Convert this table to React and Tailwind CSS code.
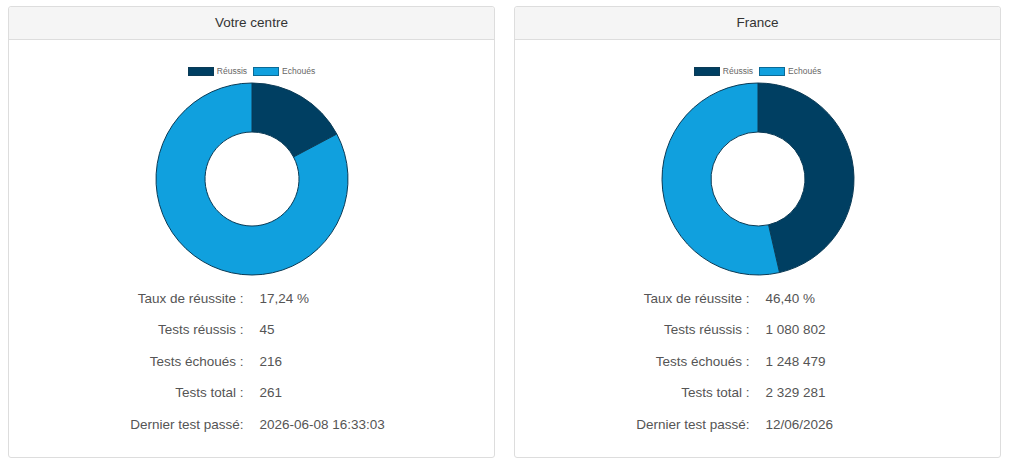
import React from 'react'

const DARK = '#003f62'
const LIGHT = '#10a0de'

function arcPath(cx, cy, R, r, a0, a1) {
  // angles as fractions of a full turn, starting at 12 o'clock, clockwise
  const p = (rad, f) => {
    const t = f * Math.PI * 2 - Math.PI / 2
    return [cx + rad * Math.cos(t), cy + rad * Math.sin(t)]
  }
  const large = a1 - a0 > 0.5 ? 1 : 0
  const [x0, y0] = p(R, a0)
  const [x1, y1] = p(R, a1)
  const [x2, y2] = p(r, a1)
  const [x3, y3] = p(r, a0)
  return `M${x0} ${y0} A${R} ${R} 0 ${large} 1 ${x1} ${y1} L${x2} ${y2} A${r} ${r} 0 ${large} 0 ${x3} ${y3} Z`
}

function Donut({ rate }) {
  const f = rate / 100
  return (
    <svg width="194" height="194" viewBox="0 0 194 194">
      <path d={arcPath(97, 97, 96, 47, 0, f)} fill={DARK} stroke="#0b3b56" strokeWidth="1" />
      <path d={arcPath(97, 97, 96, 47, f, 1)} fill={LIGHT} stroke="#0b3b56" strokeWidth="1" />
    </svg>
  )
}

function Legend() {
  return (
    <div className="flex justify-center items-center h-[9px] text-[8.5px] leading-none text-[#666]">
      <span className="w-[26px] h-[9px] bg-[#003f62] border border-[#0b3b56]" />
      <span className="ml-[3px]">Réussis</span>
      <span className="ml-[6px] w-[26px] h-[9px] bg-[#10a0de] border border-[#0b6a96]" />
      <span className="ml-[3px]">Echoués</span>
    </div>
  )
}

function Panel({ title, rate, rows }) {
  return (
    <div className="w-[487px] border border-[#dddddd] rounded-[3px] bg-white">
      <div className="h-[33px] bg-[#f5f5f5] border-b border-[#dddddd] rounded-t-[3px] flex items-center justify-center text-[13.5px] text-[#333]">
        {title}
      </div>
      <div className="pt-[27px] pb-[16px]">
        <Legend />
        <div className="mt-[6px] flex justify-center">
          <Donut rate={rate} />
        </div>
        <div className="mt-[7px] grid grid-cols-2 gap-x-[16px] text-[13.5px] text-[#555]">
          {rows.map(([label, value]) => (
            <React.Fragment key={label}>
              <div className="h-[31.6px] flex items-center justify-end">{label}</div>
              <div className="h-[31.6px] flex items-center">{value}</div>
            </React.Fragment>
          ))}
        </div>
      </div>
    </div>
  )
}

export default function App() {
  return (
    <div className="w-[1024px] h-[474px] bg-white px-[8px] pt-[6px] flex items-start gap-[19px] font-['Liberation_Sans',Arial,sans-serif]">
      <Panel
        title="Votre centre"
        rate={17.24}
        rows={[
          ['Taux de réussite :', '17,24 %'],
          ['Tests réussis :', '45'],
          ['Tests échoués :', '216'],
          ['Tests total :', '261'],
          ['Dernier test passé:', '2026-06-08 16:33:03'],
        ]}
      />
      <Panel
        title="France"
        rate={46.4}
        rows={[
          ['Taux de réussite :', '46,40 %'],
          ['Tests réussis :', '1 080 802'],
          ['Tests échoués :', '1 248 479'],
          ['Tests total :', '2 329 281'],
          ['Dernier test passé:', '12/06/2026'],
        ]}
      />
    </div>
  )
}
